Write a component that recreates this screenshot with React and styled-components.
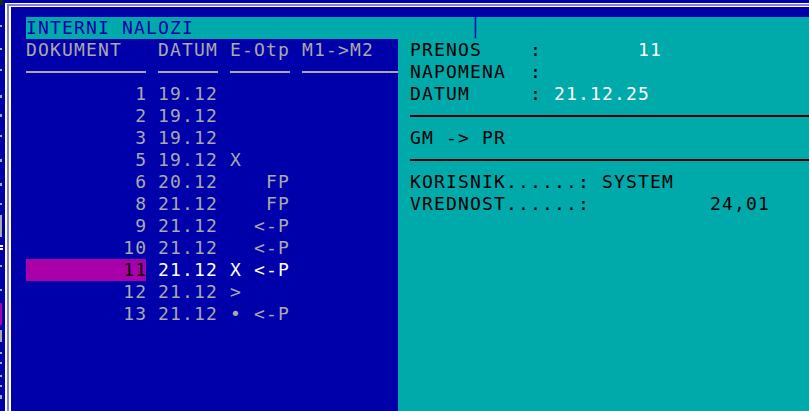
import React from 'react';
import styled, { createGlobalStyle } from 'styled-components';

const C = {
  blue: '#0000AA',
  teal: '#00AAAA',
  gray: '#AAAAAA',
  white: '#FFFFFF',
  black: '#000000',
  magenta: '#AA00AA',
  lav: '#8080D8',
};

const LS = '1.163px';

const Global = createGlobalStyle`
  html, body { margin: 0; padding: 0; background: ${C.blue}; }
  body { width: 809px; height: 411px; overflow: hidden; }
`;

const Screen = styled.div`
  width: 809px;
  height: 411px;
  display: flex;
  background: ${C.blue};
  overflow: hidden;
  font-family: "DejaVu Sans Mono", "Liberation Mono", monospace;
  font-size: 18px;
  line-height: 22px;
  letter-spacing: ${LS};
  white-space: pre;
`;

const BehindStrip = styled.div`
  width: 5px;
  flex: none;
  display: flex;
  flex-direction: column;
  padding-top: 0;
`;

const BehindLine = styled.div`
  height: ${(p) => p.$h || 22}px;
  flex: none;
  display: flex;
  flex-direction: column;
`;

const Mark = styled.div`
  margin-top: ${(p) => p.$top}px;
  height: ${(p) => p.$h}px;
  width: ${(p) => p.$w}px;
  background: ${(p) => p.$color};
`;

const Frame = styled.div`
  flex: 1;
  margin-top: 3px;
  border-top: 1px solid ${C.white};
  border-left: 2px solid ${C.white};
  background: ${C.lav};
  padding: 2px 0 0 2px;
  display: flex;
`;

const Inner = styled.div`
  flex: 1;
  border-top: 1px solid ${C.white};
  border-left: 2px solid ${C.white};
  background: ${C.blue};
  padding: 10px 0 0 15px;
  display: flex;
  flex-direction: column;
`;

const TitleBar = styled.div`
  height: 22px;
  background: ${C.teal};
  color: ${C.blue};
`;

const Body = styled.div`
  flex: 1;
  display: flex;
`;

const ListPanel = styled.div`
  width: 372px;
  flex: none;
  display: flex;
  flex-direction: column;
`;

const Row = styled.div`
  display: grid;
  grid-template-columns: 120px 60px 60px 96px;
  column-gap: 12px;
  height: 22px;
  color: ${(p) => (p.$active ? C.white : C.gray)};
`;

const Cell = styled.div`
  height: 22px;
  display: flex;
  align-items: center;
`;

const Rule = styled.div`
  flex: 1;
  height: 2px;
  background: ${(p) => p.$color};
`;

const DocCell = styled.div`
  height: 22px;
  text-align: right;
  background: ${(p) => (p.$highlight ? C.magenta : 'transparent')};
  color: ${(p) => (p.$highlight ? C.black : 'inherit')};
`;

const Trim = styled.span`
  margin-right: -${LS};
`;

const DetailPanel = styled.div`
  flex: 1;
  background: ${C.teal};
  color: ${C.black};
  padding-left: 12px;
  display: flex;
  flex-direction: column;
`;

const DetailLine = styled.div`
  height: 22px;
`;

const RuleLine = styled.div`
  height: 22px;
  display: flex;
  align-items: center;
`;

const Value = styled.span`
  color: ${(p) => (p.$bright ? C.white : C.black)};
`;

const behind = [
  { h: 17, marks: [{ top: 0, h: 5, w: 3, color: '#103010' }] },
  { marks: [{ top: 8, h: 2, w: 2, color: C.gray }] },
  { marks: [{ top: 9, h: 2, w: 2, color: C.gray }] },
  { marks: [{ top: 8, h: 2, w: 2, color: C.gray }] },
  { marks: [{ top: 12, h: 3, w: 2, color: C.gray }] },
  { marks: [{ top: 9, h: 3, w: 2, color: C.gray }] },
  { marks: [{ top: 8, h: 2, w: 2, color: C.gray }] },
  { marks: [{ top: 10, h: 3, w: 2, color: C.gray }] },
  { marks: [{ top: 12, h: 3, w: 2, color: C.gray }] },
  { marks: [{ top: 10, h: 2, w: 2, color: C.gray }] },
  { marks: [{ top: 0, h: 22, w: 2, color: C.gray }] },
  { marks: [{ top: 8, h: 2, w: 3, color: C.white }, { top: 1, h: 2, w: 3, color: C.white }] },
  { marks: [{ top: 6, h: 2, w: 2, color: C.gray }] },
  { marks: [{ top: 8, h: 2, w: 2, color: C.gray }] },
  { marks: [{ top: 0, h: 22, w: 2, color: C.magenta }] },
  { marks: [{ top: 5, h: 12, w: 2, color: C.gray }] },
  { marks: [{ top: 5, h: 2, w: 2, color: C.gray }, { top: 8, h: 2, w: 2, color: C.gray }] },
  { marks: [{ top: 6, h: 2, w: 2, color: C.gray }, { top: 8, h: 2, w: 2, color: C.gray }] },
  { marks: [{ top: 4, h: 4, w: 2, color: C.gray }] },
];

const rows = [
  { doc: '1', date: '19.12', eotp: '' },
  { doc: '2', date: '19.12', eotp: '' },
  { doc: '3', date: '19.12', eotp: '' },
  { doc: '5', date: '19.12', eotp: 'X' },
  { doc: '6', date: '20.12', eotp: '   FP' },
  { doc: '8', date: '21.12', eotp: '   FP' },
  { doc: '9', date: '21.12', eotp: '  <-P' },
  { doc: '10', date: '21.12', eotp: '  <-P' },
  { doc: '11', date: '21.12', eotp: 'X <-P', active: true },
  { doc: '12', date: '21.12', eotp: '>' },
  { doc: '13', date: '21.12', eotp: '\u2022 <-P' },
];

export default function App() {
  return (
    <>
      <Global />
      <Screen>
        <BehindStrip>
          {behind.map((l, i) => (
            <BehindLine key={i} $h={l.h}>
              {l.marks.map((m, j) => (
                <Mark key={j} $top={m.top} $h={m.h} $w={m.w} $color={m.color} />
              ))}
            </BehindLine>
          ))}
        </BehindStrip>
        <Frame>
          <Inner>
            <TitleBar>{'INTERNI NALOZI                       \u2502'}</TitleBar>
            <Body>
              <ListPanel>
                <Row>
                  <Cell>DOKUMENT</Cell>
                  <Cell>DATUM</Cell>
                  <Cell>E-Otp</Cell>
                  <Cell>M1-&gt;M2</Cell>
                </Row>
                <Row>
                  <Cell><Rule $color={C.gray} /></Cell>
                  <Cell><Rule $color={C.gray} /></Cell>
                  <Cell><Rule $color={C.gray} /></Cell>
                  <Cell><Rule $color={C.gray} /></Cell>
                </Row>
                {rows.map((r) => (
                  <Row key={r.doc} $active={r.active}>
                    <DocCell $highlight={r.active}><Trim>{r.doc}</Trim></DocCell>
                    <Cell>{r.date}</Cell>
                    <Cell>{r.eotp}</Cell>
                    <Cell />
                  </Row>
                ))}
              </ListPanel>
              <DetailPanel>
                <DetailLine>{'PRENOS    :        '}<Value $bright>11</Value></DetailLine>
                <DetailLine>{'NAPOMENA  :'}</DetailLine>
                <DetailLine>{'DATUM     : '}<Value $bright>21.12.25</Value></DetailLine>
                <RuleLine><Rule $color={C.black} /></RuleLine>
                <DetailLine>{'GM -> PR'}</DetailLine>
                <RuleLine><Rule $color={C.black} /></RuleLine>
                <DetailLine>{'KORISNIK......: '}<Value>SYSTEM</Value></DetailLine>
                <DetailLine>{'VREDNOST......:          '}<Value>24,01</Value></DetailLine>
              </DetailPanel>
            </Body>
          </Inner>
        </Frame>
      </Screen>
    </>
  );
}
